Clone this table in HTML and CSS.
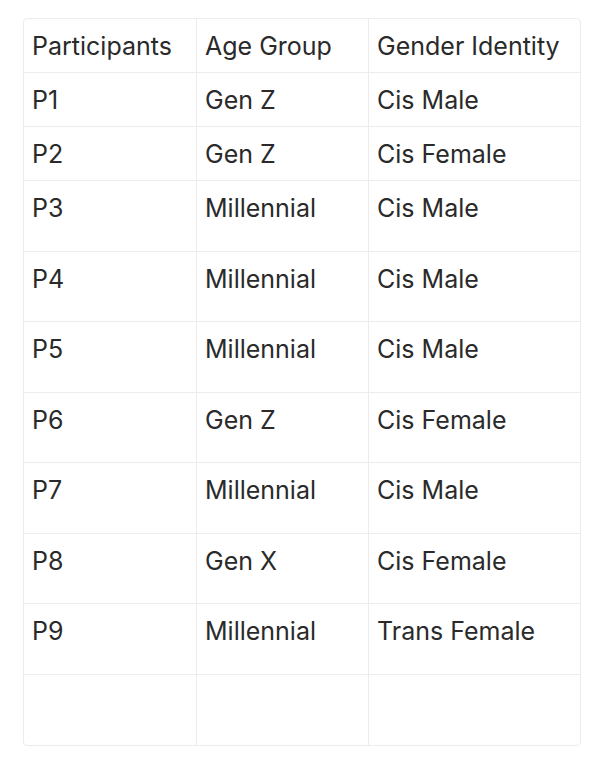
FILE: index.html
```html
<!DOCTYPE html>
<html lang="en">
<head>
<meta charset="utf-8">
<title>Participants</title>
<link rel="stylesheet" href="styles.css">
</head>
<body>
<div class="page">
  <div class="table">
    <div class="cell head">Participants</div>
    <div class="cell head">Age Group</div>
    <div class="cell head last-col">Gender Identity</div>

    <div class="cell">P1</div>
    <div class="cell">Gen Z</div>
    <div class="cell last-col">Cis Male</div>

    <div class="cell">P2</div>
    <div class="cell">Gen Z</div>
    <div class="cell last-col">Cis Female</div>

    <div class="cell">P3</div>
    <div class="cell">Millennial</div>
    <div class="cell last-col">Cis Male</div>

    <div class="cell">P4</div>
    <div class="cell">Millennial</div>
    <div class="cell last-col">Cis Male</div>

    <div class="cell">P5</div>
    <div class="cell">Millennial</div>
    <div class="cell last-col">Cis Male</div>

    <div class="cell">P6</div>
    <div class="cell">Gen Z</div>
    <div class="cell last-col">Cis Female</div>

    <div class="cell">P7</div>
    <div class="cell">Millennial</div>
    <div class="cell last-col">Cis Male</div>

    <div class="cell">P8</div>
    <div class="cell">Gen X</div>
    <div class="cell last-col">Cis Female</div>

    <div class="cell">P9</div>
    <div class="cell">Millennial</div>
    <div class="cell last-col">Trans Female</div>

    <div class="cell last-row"></div>
    <div class="cell last-row"></div>
    <div class="cell last-row last-col"></div>
  </div>
</div>
</body>
</html>
```
FILE: styles.css
```css
html, body {
  margin: 0;
  padding: 0;
  background: #ffffff;
}

.page {
  padding: 18px 0 0 23px;
  font-family: Inter, "Noto Sans", sans-serif;
  font-size: 25px;
  color: #2a2a2a;
}

.table {
  display: grid;
  width: 558px;
  box-sizing: border-box;
  grid-template-columns: 173px 172px 211px;
  grid-template-rows: 54px 54px 54px repeat(8, 70.5px);
  border: 1px solid #ececec;
  border-radius: 4px;
}

.cell {
  box-sizing: border-box;
  padding: 9px 8px 0 8px;
  line-height: 36px;
  border-right: 1px solid #ececec;
  border-bottom: 1px solid #ececec;
  white-space: nowrap;
}

.last-col {
  border-right: none;
}

.last-row {
  border-bottom: none;
}
```
